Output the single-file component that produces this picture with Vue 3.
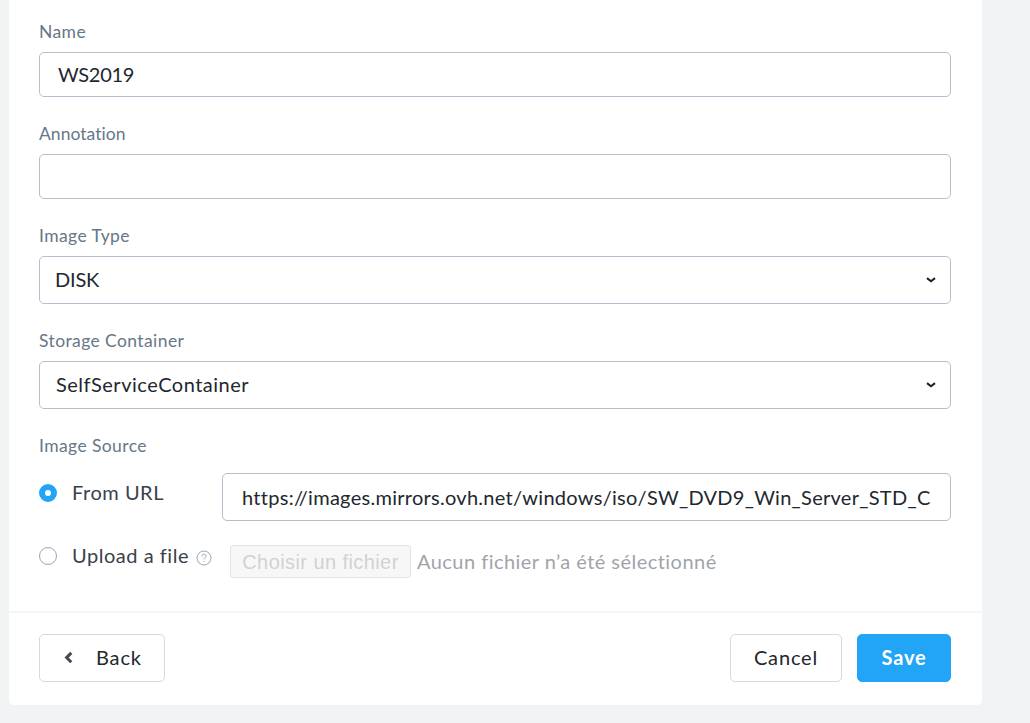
<script setup>
import { ref } from 'vue'

const name = 'WS2019'
const annotation = ''
const url = 'https://images.mirrors.ovh.net/windows/iso/SW_DVD9_Win_Server_STD_C'
const source = ref('url')
</script>

<template>
  <div class="page">
    <form class="card" @submit.prevent>
      <div class="body">
        <div class="field">
          <div class="label"><span class="t-name">Name</span></div>
          <div class="input"><span class="t-ws">{{ name }}</span></div>
        </div>
        <div class="field">
          <div class="label"><span class="t-annot">Annotation</span></div>
          <div class="input">{{ annotation }}</div>
        </div>
        <div class="field">
          <div class="label"><span>Image Type</span></div>
          <div class="input select">
            <span class="t-disk">DISK</span>
            <svg class="chev" width="10" height="6" viewBox="0 0 10 6"><path d="M1 1.1 5 4.3 9 1.1" /></svg>
          </div>
        </div>
        <div class="field">
          <div class="label"><span>Storage Container</span></div>
          <div class="input select">
            <span class="t-self">SelfServiceContainer</span>
            <svg class="chev" width="10" height="6" viewBox="0 0 10 6"><path d="M1 1.1 5 4.3 9 1.1" /></svg>
          </div>
        </div>
        <div class="label"><span>Image Source</span></div>
        <div class="row url-row">
          <div class="option" @click="source = 'url'">
            <i class="radio" :class="{ on: source === 'url' }"></i>
            <span>From URL</span>
          </div>
          <div class="input url"><span class="t-url">{{ url }}</span></div>
        </div>
        <div class="row file-row">
          <div class="option" @click="source = 'file'">
            <i class="radio" :class="{ on: source === 'file' }"></i>
            <span>Upload a file</span>
            <svg class="help" width="16" height="16" viewBox="0 0 16 16">
              <circle cx="8" cy="8" r="7" />
              <path d="M5.9 6.4C5.9 5 6.8 4.2 8 4.2s2.1.8 2.1 1.9c0 1.5-2 1.6-2 3.3M8.1 10.9v1.2" />
            </svg>
          </div>
          <div class="file">
            <span class="choose">Choisir un fichier</span>
            <span class="none">Aucun fichier n’a été sélectionné</span>
          </div>
        </div>
      </div>
      <div class="footer">
        <button class="btn back" type="button">
          <svg width="9" height="14" viewBox="0 0 9 14"><path d="M7.3 1.9 2.6 6.6l4.7 4.7" /></svg>
          <span>Back</span>
        </button>
        <span class="grow"></span>
        <button class="btn cancel" type="button"><span>Cancel</span></button>
        <button class="btn save" type="submit"><span>Save</span></button>
      </div>
    </form>
  </div>
</template>

<style>
body { background: #f2f3f5; }
</style>

<style scoped>
.page {
  height: 723px;
  box-sizing: border-box;
  padding: 0 48px 18px 9px;
  overflow: hidden;
  background: #f2f3f5;
  font-family: Lato, "Liberation Sans", sans-serif;
  font-size: 20px;
  font-variant-ligatures: none;
  color: #22272e;
}
.card {
  height: 705px;
  display: flex;
  flex-direction: column;
  background: #fff;
  border-radius: 0 0 5px 5px;
}
.body {
  box-sizing: border-box;
  height: 611px;
  padding: 22px 31px 0 30px;
}
.field { margin-bottom: 27px; }
.label {
  height: 20px;
  line-height: 20px;
  margin-bottom: 10px;
  font-size: 17.5px;
  letter-spacing: 0.4px;
  color: #667788;
  white-space: nowrap;
}
.t-annot { letter-spacing: 0.03px; }
.input {
  box-sizing: border-box;
  height: 45px;
  display: flex;
  align-items: center;
  padding: 0 16px 2px 19px;
  border: 1px solid #b8becb;
  border-radius: 5px;
  background: #fff;
  white-space: nowrap;
}
.select {
  height: 48px;
  justify-content: space-between;
  padding: 0 14px 2px 16px;
}
.t-self { letter-spacing: 0.5px; }
.t-disk { margin-left: -1px; letter-spacing: -0.2px; }
.t-url { letter-spacing: 0.28px; }
.t-ws { margin-left: -1px; letter-spacing: -0.3px; }
.chev { margin-top: 1px; fill: none; stroke: #1b2027; stroke-width: 2; }
.row { display: flex; }
.url-row { margin-top: 17px; }
.option {
  display: flex;
  align-items: center;
  flex: none;
  height: 24px;
  line-height: 24px;
  letter-spacing: 0.53px;
  color: #3a414c;
  white-space: nowrap;
}
.option span { margin-top: -2px; }
.url-row .option { width: 183px; margin-top: 8px; }
.url { flex: 1; height: 48px; padding-bottom: 0; overflow: hidden; }
.radio {
  box-sizing: border-box;
  width: 18px;
  height: 18px;
  margin-right: 15px;
  border: 1px solid #9aa5b5;
  border-radius: 50%;
  background: #fff;
}
.radio.on { border: 6px solid #22a5f7; }
.file-row { margin-top: 23px; }
.file-row .option { width: 191px; }
.help {
  margin: 3px 0 0 7.5px;
  fill: none;
  stroke: #9aa5b5;
  stroke-width: 1;
}
.file {
  display: flex;
  align-items: center;
  margin-top: 1px;
  height: 33px;
  white-space: nowrap;
}
.choose {
  box-sizing: border-box;
  width: 181px;
  height: 33px;
  line-height: 32px;
  text-align: center;
  letter-spacing: 0.42px;
  border: 1px solid #e3e3e3;
  border-radius: 3px;
  background: #f7f7f7;
  color: #d2d2d2;
  font-family: "Liberation Sans", Arial, sans-serif;
}
.none { margin: -2px 0 0 6px; letter-spacing: 0.46px; color: #9fa4aa; }
.footer {
  flex: 1;
  box-sizing: border-box;
  display: flex;
  align-items: flex-start;
  padding: 21px 31px 0 30px;
  border-top: 2px solid #f4f5f6;
}
.grow { flex: 1; }
.btn {
  box-sizing: border-box;
  height: 48px;
  display: flex;
  align-items: center;
  justify-content: center;
  padding: 0;
  border: 1px solid #d5d9e1;
  border-radius: 5px;
  background: #fff;
  color: #22272e;
  font: inherit;
  letter-spacing: 0.85px;
}
.btn span { margin-top: -2px; }
.back { width: 126px; justify-content: flex-start; padding-left: 24px; }
.back svg { margin-right: 23px; fill: none; stroke: #454a54; stroke-width: 3; }
.cancel { width: 112px; margin-right: 15px; }
.save { width: 94px; border-color: #22a5f7; background: #22a5f7; color: #fff; font-weight: 700; }
</style>
